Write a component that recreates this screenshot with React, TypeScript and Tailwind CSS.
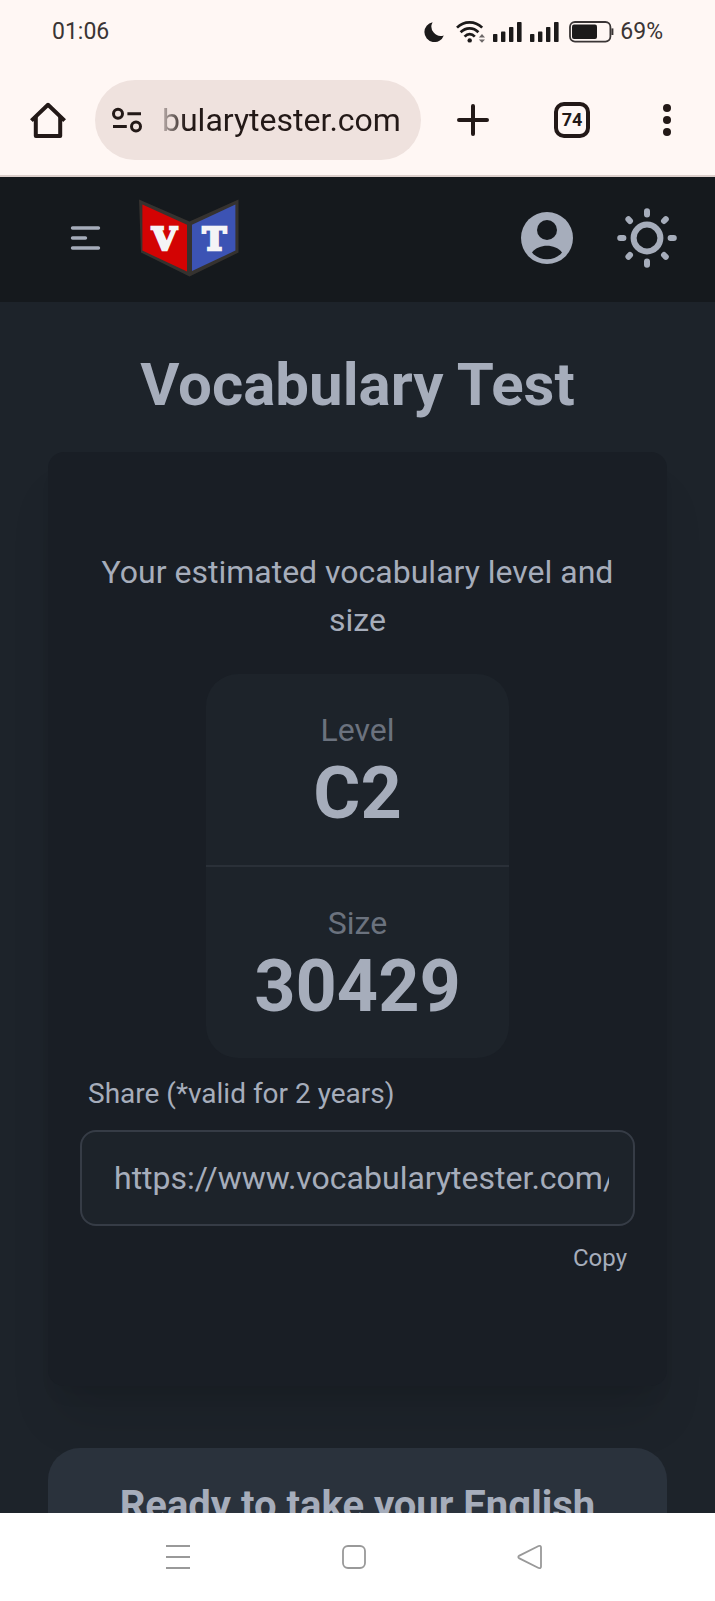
import { useState } from 'react'

const SHARE_URL = 'https://www.vocabularytester.com/test/result'

function SignalIcon() {
  return (
    <svg width="29" height="20" viewBox="0 0 29 20" fill="#1c1a1a" aria-hidden="true">
      <rect x="0" y="12" width="4.4" height="8" rx="0.8" />
      <rect x="8" y="9.6" width="4.4" height="10.4" rx="0.8" />
      <rect x="16" y="5" width="4.4" height="15" rx="0.8" />
      <rect x="24" y="0" width="4.6" height="20" rx="0.8" />
    </svg>
  )
}

function StatusBar() {
  return (
    <div className="flex h-16 items-center justify-between px-13 text-[23px] text-[#3a3535]">
      <span>01:06</span>
      <div className="flex items-center">
        <svg className="mr-3" width="20" height="20" viewBox="0 0 20 20" aria-hidden="true">
          <path d="M8.6 0.2A10 10 0 1 0 19.8 13.4A9.3 9.3 0 0 1 8.6 0.2Z" fill="#1c1a1a" />
        </svg>
        <svg className="mr-2" width="29" height="22" viewBox="0 0 29 22" fill="none" aria-hidden="true">
          <g stroke="#1c1a1a" strokeWidth="2.7">
            <path d="M1 6.6C8 -0.4 19 -0.4 26.2 6.6" />
            <path d="M4.6 11.2C9.8 6 17.4 6 22.4 11.2" />
            <path d="M8.6 15.6C11.6 12.4 15.8 12.4 18.8 15.6" />
          </g>
          <circle cx="13.7" cy="19.4" r="2.2" fill="#1c1a1a" />
          <path d="M22.8 16.4L26 13L29 16.4ZM22.8 18.4L26 21.8L29 18.4Z" fill="#6d6868" />
        </svg>
        <span className="mr-2 flex"><SignalIcon /></span>
        <span className="mr-2.5 flex"><SignalIcon /></span>
        <svg className="mr-1.5" width="45" height="22" viewBox="0 0 45 22" aria-hidden="true">
          <rect x="1" y="1" width="40.4" height="19.6" rx="5" fill="none" stroke="#3a3535" strokeWidth="1.8" />
          <rect x="3" y="3.4" width="25" height="14.6" rx="2" fill="#1c1a1a" />
          <path d="M43.4 7.4V14" stroke="#3a3535" strokeWidth="2" />
        </svg>
        <span>69%</span>
      </div>
    </div>
  )
}

function BrowserBar() {
  return (
    <div className="flex h-[113px] items-center border-b-2 border-[#dccfcb] pr-9 pl-[30px]">
      <button type="button" aria-label="Home" className="mr-[29px]">
        <svg width="36" height="36" viewBox="0 0 36 36" fill="none" stroke="#231917" strokeWidth="4" strokeLinejoin="round">
          <path d="M1.4 18.6L18 2.8L34.6 18.6" />
          <path d="M5.8 15V34H30.2V15" />
        </svg>
      </button>
      <div className="mr-9 flex h-20 min-w-0 flex-1 items-center rounded-full bg-[#efe2de] pr-3 pl-[17px]">
        <button type="button" aria-label="Site settings" className="mr-5 shrink-0">
          <svg width="30" height="26" viewBox="0 0 30 26" fill="none" stroke="#231917" strokeWidth="3">
            <circle cx="6" cy="6.8" r="4.5" />
            <path d="M15.4 6.8H29M1 19.6H14.8" />
            <circle cx="24" cy="19.6" r="4.5" />
          </svg>
        </button>
        <input
          aria-label="Address"
          readOnly
          value="bularytester.com"
          className="w-full min-w-0 bg-transparent text-[32px] text-[#231917] outline-none [mask-image:linear-gradient(to_right,rgba(0,0,0,0.25),#000_24px)]"
        />
      </div>
      <div className="flex items-center gap-[65px]">
        <button type="button" aria-label="New tab">
          <svg width="32" height="32" viewBox="0 0 32 32" stroke="#231917" strokeWidth="4" strokeLinecap="round">
            <path d="M16 2V30M2 16H30" />
          </svg>
        </button>
        <button type="button" aria-label="Tabs" className="flex size-9 items-center justify-center rounded-[10px] border-4 border-[#231917] text-lg font-bold text-[#231917]">
          74
        </button>
        <button type="button" aria-label="More">
          <svg width="24" height="34" viewBox="0 0 24 34" fill="#231917">
            <circle cx="12" cy="5" r="4" />
            <circle cx="12" cy="17" r="4" />
            <circle cx="12" cy="29" r="4" />
          </svg>
        </button>
      </div>
    </div>
  )
}

function Logo() {
  return (
    <svg width="100" height="78" viewBox="0 0 100 78" aria-hidden="true">
      <path d="M0 0.5L50.5 22.5L99.5 0.5V53.5L50.5 77.5L2 53.5Z" fill="#35322f" />
      <path d="M3.4 5.6L48 25.8V72.6L3.4 51.6Z" fill="#d30303" />
      <path d="M53 25.8L96.4 5.6V51.6L53 72Z" fill="#3c53b4" />
      <g fill="#f4f4f6" stroke="#f4f4f6" strokeWidth="2.6" fontFamily="'DejaVu Serif', serif" fontWeight="700" fontSize="32" textAnchor="middle">
        <text x="25.5" y="51.4">V</text>
        <text x="75.5" y="51.4">T</text>
      </g>
    </svg>
  )
}

function SiteHeader() {
  return (
    <header className="flex h-[125px] shrink-0 items-center justify-between bg-[#15191d] pr-9 pb-[3px] pl-[70px]">
      <div className="flex items-center gap-[37px]">
        <button type="button" aria-label="Menu">
          <svg width="32" height="26" viewBox="0 0 32 26" stroke="#a6adbb" strokeWidth="3.6" strokeLinecap="round">
            <path d="M2.6 3H28.4M2.6 13H15.4M2.6 23H28.4" />
          </svg>
        </button>
        <a href="#home" aria-label="Vocabulary Tester"><Logo /></a>
      </div>
      <div className="flex items-center gap-10">
        <button type="button" aria-label="Account">
          <svg width="56" height="56" viewBox="0 0 56 56">
            <circle cx="28" cy="28" r="26" fill="#a6adbb" />
            <circle cx="28" cy="20" r="10" fill="#15191d" />
            <path d="M13 42.4C20 33.6 36 33.6 43 42.4C36 51.6 20 51.6 13 42.4Z" fill="#15191d" />
          </svg>
        </button>
        <button type="button" aria-label="Theme">
          <svg width="64" height="64" viewBox="0 0 64 64" fill="none" stroke="#a6adbb" strokeWidth="6" strokeLinecap="round">
            <circle cx="32" cy="32" r="13.4" />
            <path d="M32 5.2V8.4M32 55.6V58.8M5.2 32H8.4M55.6 32H58.8M13.4 13.2L15 15M49 49L50.8 50.8M50.8 13.2L49 15M15 49L13.4 50.8" />
          </svg>
        </button>
      </div>
    </header>
  )
}

function Stat({ title, value }: { title: string; value: string }) {
  return (
    <div className="flex flex-col items-center px-12 py-8">
      <div className="text-[32px] leading-[48px] text-[#6b727e]">{title}</div>
      <div className="text-7xl leading-[79px] font-bold">{value}</div>
    </div>
  )
}

function ResultCard() {
  const [copied, setCopied] = useState(false)

  const copy = () => {
    navigator.clipboard?.writeText(SHARE_URL)
    setCopied(true)
  }

  return (
    <section className="rounded-2xl bg-[#191e25] px-8 py-24 shadow-[0_40px_50px_-10px_rgba(0,0,0,0.1),0_16px_20px_-12px_rgba(0,0,0,0.1)]">
      <p className="text-center text-[32px] leading-[48px]">
        Your estimated vocabulary level and size
      </p>
      <div className="mx-auto mt-[30px] w-fit divide-y-2 divide-[#2a3038] rounded-[32px] bg-[#1d232a]">
        <Stat title="Level" value="C2" />
        <Stat title="Size" value="30429" />
      </div>
      <div className="flex flex-col">
        <label htmlFor="share" className="px-2 py-4 text-[28px] leading-10">
          Share (*valid for 2 years)
        </label>
        <input
          id="share"
          readOnly
          value={SHARE_URL}
          className="h-24 w-full rounded-2xl border-2 border-[#363c46] bg-[#1d232a] pr-6 pl-8 text-[32px] outline-none"
        />
        <button type="button" onClick={copy} className="self-end px-2 py-4 text-2xl leading-8">
          {copied ? 'Copied' : 'Copy'}
        </button>
      </div>
    </section>
  )
}

function NavBar() {
  return (
    <nav className="flex h-[88px] shrink-0 items-center justify-center gap-[148px] bg-white pr-2">
      <button type="button" aria-label="Recent apps">
        <svg width="28" height="28" viewBox="0 0 28 28" stroke="#999" strokeWidth="2">
          <path d="M2 3H26M2 14H26M2 25H26" />
        </svg>
      </button>
      <button type="button" aria-label="Home screen">
        <svg width="28" height="28" viewBox="0 0 28 28" fill="none" stroke="#999" strokeWidth="1.8">
          <rect x="3" y="3" width="22" height="22" rx="5" />
        </svg>
      </button>
      <button type="button" aria-label="Back">
        <svg width="28" height="28" viewBox="0 0 28 28" fill="none" stroke="#999" strokeWidth="1.8" strokeLinejoin="round">
          <path d="M3.4 12.6L22.6 3Q25 2.4 25 4.6V23.4Q25 25.6 22.6 25L3.4 15.4Q1.2 14 3.4 12.6Z" />
        </svg>
      </button>
    </nav>
  )
}

export default function App() {
  return (
    <div className="flex h-screen flex-col overflow-hidden bg-[#1d232a] font-[Roboto,sans-serif] text-[#a6adbb]">
      <div className="shrink-0 bg-[#fff7f4]">
        <StatusBar />
        <BrowserBar />
      </div>
      <SiteHeader />
      <main className="min-h-0 flex-1 overflow-y-auto px-12 [scrollbar-width:none]">
        <h1 className="pt-12 pb-8 text-center text-[60px] leading-[70px] font-bold">Vocabulary Test</h1>
        <ResultCard />
        <section className="mt-[62px] rounded-[32px] bg-[#2a323c] px-16 pt-8 pb-16 text-center">
          <h2 className="text-[40px] leading-[52px] font-bold">Ready to take your English test?</h2>
        </section>
      </main>
      <NavBar />
    </div>
  )
}
